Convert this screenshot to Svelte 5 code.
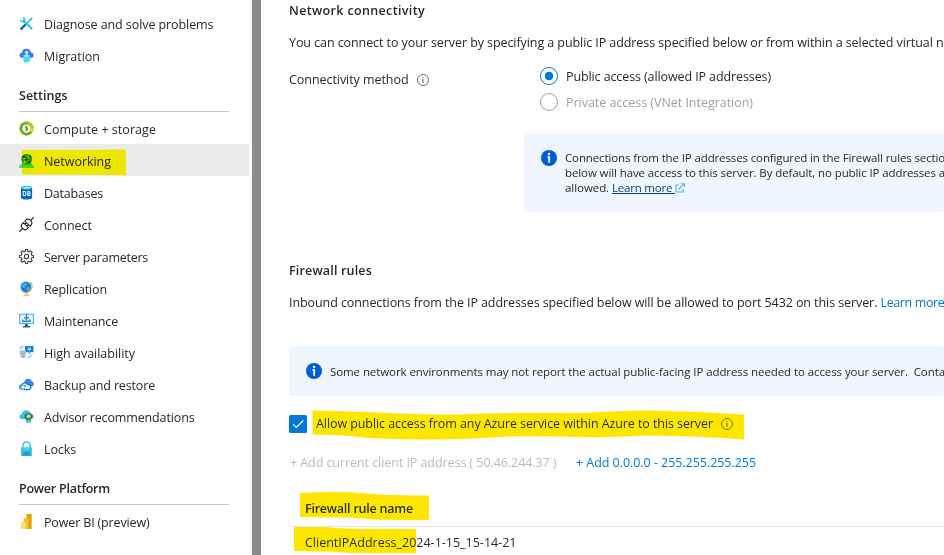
<script>
  const settings = [
    { id: 'compute', label: 'Compute + storage', width: 112 },
    { id: 'network', label: 'Networking', width: 67, selected: true },
    { id: 'database', label: 'Databases', width: 59 },
    { id: 'connect', label: 'Connect', width: 48 },
    { id: 'gear', label: 'Server parameters', width: 104 },
    { id: 'globe', label: 'Replication', width: 63 },
    { id: 'maintenance', label: 'Maintenance', width: 74 },
    { id: 'availability', label: 'High availability', width: 91 },
    { id: 'backup', label: 'Backup and restore', width: 111 },
    { id: 'advisor', label: 'Advisor recommendations', width: 150.5 },
    { id: 'lock', label: 'Locks', width: 32 }
  ];
  const top = [
    { id: 'diagnose', label: 'Diagnose and solve problems', width: 169.5 },
    { id: 'migration', label: 'Migration', width: 56 }
  ];
  const power = [{ id: 'powerbi', label: 'Power BI (preview)', width: 105.5 }];

  // Spreads the letters so that a label takes the given width.
  function fit(node, width) {
    const natural = node.getBoundingClientRect().width;
    node.style.letterSpacing = `${(width - natural) / node.textContent.length}px`;
  }
</script>

{#snippet icon(id)}
  <svg class="icon" viewBox="0 0 16 16" width="15" height="15">
    {#if id === 'diagnose'}
      <path d="M3 13.200 13.200 3" stroke="#32bedd" stroke-width="1.600" />
      <path d="M13.700 1.600l1 1-1.500 2-1.200.2-.6-.6.3-1.200z" fill="#5ea0ef" />
      <path d="M2.400 13.700 6.800 9.200" stroke="#0f6cbd" stroke-width="2.600" stroke-linecap="round" />
      <path d="M5 5l8.300 8.400" stroke="#32c5e8" stroke-width="2.400" stroke-linecap="round" />
      <path d="M1.200 3.200 3 5l1.600-.4L5 3 3.300 1.200C6 .7 7.500 2.500 6.700 5.300L5.200 6.800C2.600 7.500.700 5.800 1.200 3.200z" fill="#32c5e8" />
    {:else if id === 'migration'}
      <path d="M3.600 10.500C1.500 10.500.500 9.100.500 7.700S1.600 5.200 3 5C3.300 2.500 5.300.800 8 .800s4.300 1.600 4.800 3.900c1.700.200 2.900 1.400 2.900 3s-1.200 2.800-3 2.800z" fill="#347ee8" />
      <path d="M4.700 8.200h6.800V14c0 2-6.800 2-6.800 0z" fill="#45dcf5" />
      <ellipse cx="8.100" cy="8.300" rx="3.400" ry="1.200" fill="#7eeaff" />
      <path d="M7.400 8.500v-3H5.700L8.100 2.700l2.400 2.800H8.800v3z" fill="#fff" />
    {:else if id === 'compute'}
      <circle cx="8" cy="8" r="6" fill="#fff" stroke="#6bb11f" stroke-width="3.200" />
      <path d="M8 2a6 6 0 0 1 5.700 8" fill="none" stroke="#a5cb2b" stroke-width="3.200" />
      <path d="M13.900 7a6 6 0 0 1-1 4.400" fill="none" stroke="#f5d516" stroke-width="3.200" />
      <path d="M8 5v6M9.300 6.300H7.500c-1 0-1 1.600.2 1.600h.8c1.200 0 1.200 1.700 0 1.700H6.700" fill="none" stroke="#417e20" stroke-width=".9" />
    {:else if id === 'network'}
      <path d="M.5 16V14l2.600-3h9.800l2.600 3v2z" fill="#34ce94" />
      <path d="M0 13.500h16V16H0z" fill="#42dba3" />
      <circle cx="8.200" cy="6.700" r="5.900" fill="#2e9a2a" />
      <path d="M3.500 5 8 7l3.500-5M8 7l4.500 3M8 7l-3 4" fill="none" stroke="#b9d635" stroke-width="1.300" />
      <circle cx="8" cy="7" r="1.700" fill="#075a19" /><circle cx="5" cy="4.200" r="1.500" fill="#075a19" /><circle cx="11.200" cy="9.500" r="1.500" fill="#075a19" /><circle cx="11.500" cy="3.500" r="1.200" fill="#075a19" />
    {:else if id === 'database'}
      <path d="M2 2.800h12v10.800c0 2.600-12 2.600-12 0z" fill="#0669bd" />
      <ellipse cx="8" cy="2.800" rx="6" ry="2.100" fill="#37c4e4" />
      <ellipse cx="8" cy="3" rx="4" ry="1" fill="#a5edf8" />
      <text x="8" y="11.400" text-anchor="middle" font-size="6.500" font-weight="700" fill="#e6f5ff">DB</text>
    {:else if id === 'connect'}
      <g fill="none" stroke="#222" stroke-width="1.200" transform="rotate(-45 8 8)">
        <path d="M-3 8h5M14 8h5M7 4.200H5.500a3.500 3.800 0 0 0 0 7.600H7zM9.300 4.200h1.400a3.500 3.800 0 0 1 0 7.600H9.300zM7 6.300h2.200M7 9.700h2.200" />
      </g>
    {:else if id === 'gear'}
      <g fill="none" stroke="#333" stroke-width="1.100" stroke-linejoin="round">
        <path d="m6.900.6-.5 2.100-1 .4-1.900-1.200-1.600 1.600 1.200 1.900-.4 1-2.100.5v2.200l2.100.5.4 1-1.200 1.900 1.600 1.600 1.900-1.200 1 .4.5 2.100h2.200l.5-2.100 1-.4 1.900 1.200 1.600-1.600-1.200-1.900.4-1 2.100-.5V6.900l-2.100-.5-.4-1 1.200-1.900-1.600-1.600-1.900 1.200-1-.4-.5-2.100z" />
        <circle cx="8" cy="8" r="2.300" />
      </g>
    {:else if id === 'globe'}
      <path d="M12 1.200c3.800 3.900 2 10.300-3.800 11.100-2.300.3-4.200-.6-5.200-1.900M8.200 12.500V15M5.200 15h6" fill="none" stroke="#f2a657" stroke-width="1.300" />
      <circle cx="7.300" cy="6.200" r="5.700" fill="#1b80d4" />
      <path d="M5 2.500 8 1.800l1 2-2 1.300-.5 2L4 7 2.200 5zM8.500 7.200 11.500 6l.8 1.400-2.500 3-1.500-.7z" fill="#35b8e9" />
    {:else if id === 'maintenance'}
      <path d="M.7 1.300h14.600v9.900H.7z" fill="#e9f7fe" stroke="#4aafe2" stroke-width="1.200" />
      <path d="M6.300 11.700h3.400v2.100H12v1.700H4v-1.700h2.300z" fill="#2369a8" />
      <path d="M8 .5v6M5.600 4.300 8 6.700l2.400-2.400M4 6.800v2h8v-2" fill="none" stroke="#2488cc" stroke-width="1.350" />
    {:else if id === 'availability'}
      <path d="M6.500 1h9v6.700h-9z" fill="#1687db" /><path d="M9.500 2.700h3v3h-3z" fill="#9bdefa" />
      <path d="M9.700 7.700h2.700v1.500H9.700z" fill="#57afe0" />
      <path d="M.8 5.800h6.500v5.400H.8z" fill="#b3b7bb" /><path d="M3 11.200h3v1.300H3zM1.800 12.300h5v1h-5z" fill="#91979d" />
      <path d="M1.200 4.500C1.500 2.800 3 1.700 4.800 1.600M9 13.200c1.900.2 3.500-.8 4.400-2.700" fill="none" stroke="#60b9eb" stroke-width="1.100" />
    {:else if id === 'backup'}
      <path d="M5.500 7c-.3-3 1.600-5.200 4.300-5.200 2.100 0 3.600 1.300 4 3.100 1.300.3 2 1.300 2 2.500 0 1.700-1.300 2.800-3 2.800H9z" fill="#3c83e5" />
      <path d="M3.200 13.300C-.2 13 .100 8.800 3.100 8.500c.7-2.900 5-3.100 6.300-.3 2 .100 3.200 1.400 3.200 2.800 0 1.500-1.300 2.500-3 2.500H4.500" fill="#fff" stroke="#1377cf" stroke-width="1.300" />
      <path d="M6.800 10.200A2 2 0 1 0 6.500 12M6.900 8.800v1.800H5.100" fill="none" stroke="#32a7e2" stroke-width="1" />
    {:else if id === 'advisor'}
      <path d="M3.600 11C1.500 11 .4 9.600.4 8.200c0-1.500 1.200-2.600 2.700-2.800.2-2.400 2.200-4.200 4.700-4.200s4.300 1.600 4.900 3.900c1.700.2 2.900 1.400 2.900 3 0 1.700-1.200 2.900-3 2.900z" fill="#32c8e7" />
      <path d="M7.500 9.500h2.400v5.300l-1.200-.8-1.200 1.100zM10.300 9.500h2.200v5.600l-1.100-1.100-1.100.8z" fill="#35b8a6" />
      <path d="m10 4.200 1.300.6 1.400-.2.600 1.300 1.300.8-.3 1.300.3 1.300-1.300.7-.6 1.300-1.400-.1-1.300.7-1.300-.7-1.300.1-.6-1.300-1.100-.7.2-1.300-.2-1.300 1.100-.8.600-1.300 1.300.2z" fill="#13768a" />
      <circle cx="10.200" cy="7.800" r="2.300" fill="#ffc71f" />
    {:else if id === 'lock'}
      <path d="M4.200 7.500V4.900C4.200 2.500 5.700 1 8 1s3.800 1.500 3.800 3.900v2.600" fill="none" stroke="#4dc8e5" stroke-width="1.700" />
      <path d="M2.300 7h11.400v8.700H2.300z" fill="#2bc1df" /><path d="M2.300 15.700 8 10.500l5.700 5.200z" fill="#199fc2" /><path d="M2.300 7h11.400L8 11.300z" fill="#42d4ed" />
    {:else if id === 'powerbi'}
      <path d="M8 0h5.500v16H8z" fill="#dfa400" /><path d="M5 4.300h5V16H5z" fill="#efc333" /><path d="M2 8.500h5.200V16H2z" fill="#f8df68" />
    {/if}
  </svg>
{/snippet}

{#snippet items(list)}
  <ul>
    {#each list as item}
      <li class:selected={item.selected}>
        {@render icon(item.id)}
        <span class="t" use:fit={item.width}>{item.label}</span>
      </li>
    {/each}
  </ul>
{/snippet}

{#snippet hint()}
  <svg class="hint" viewBox="0 0 12 12" width="12" height="12">
    <circle cx="6" cy="6" r="5.500" fill="none" stroke="currentColor" stroke-width=".9" />
    <path d="M6 5v4M6 3v1" stroke="currentColor" stroke-width="1" />
  </svg>
{/snippet}

{#snippet info()}
  <svg class="info" viewBox="0 0 16 16" width="16" height="16">
    <circle cx="8" cy="8" r="8" fill="#015cda" />
    <circle cx="8" cy="4" r="1.300" fill="#fff" />
    <path d="M6.200 6.300h2.900v6.400H7.200V7.400h-1z" fill="#fff" />
  </svg>
{/snippet}

<div class="page">
  <nav>
    <div class="top">{@render items(top)}</div>
    <h2 class="first"><span class="t" use:fit={48.500}>Settings</span></h2>
    <div class="group">{@render items(settings)}</div>
    <h2 class="second"><span class="t" use:fit={91}>Power Platform</span></h2>
    <div class="group">{@render items(power)}</div>
  </nav>
  <div class="divider"></div>
  <main>
    <h3><span class="t" use:fit={136}>Network connectivity</span></h3>
    <p class="intro"><span class="t" use:fit={654.500}>You can connect to your server by specifying a public IP address specified below or from within a selected virtual n</span></p>
    <div class="method">
      <div class="method-label"><span class="t" use:fit={119.500}>Connectivity method</span>{@render hint()}</div>
      <div class="radios">
        <div class="radio on"><i></i><span class="t" use:fit={205}>Public access (allowed IP addresses)</span></div>
        <div class="radio off"><i></i><span class="t" use:fit={187}>Private access (VNet Integration)</span></div>
      </div>
    </div>
    <div class="banner tall">
      {@render info()}
      <div class="lines">
        <div><span class="t" use:fit={387}>Connections from the IP addresses configured in the Firewall rules section</span></div>
        <div><span class="t" use:fit={380}>below will have access to this server. By default, no public IP addresses a</span></div>
        <div class="last"><span class="t" use:fit={47}>{'allowed. '}</span><a class="t" href="#more" use:fit={63}>{'Learn more '}</a><svg viewBox="0 0 10 10" width="10" height="10"><path d="M4 2H1v7h7V6M3.500 6.500 9 1M6 .7h3.400V4" fill="none" stroke="#55b5db" stroke-width="1.100" /></svg></div>
      </div>
    </div>
    <h3 class="rules"><span class="t" use:fit={83}>Firewall rules</span></h3>
    <p class="inbound"><span class="t" use:fit={591.500}>{'Inbound connections from the IP addresses specified below will be allowed to port 5432 on this server. '}</span><span class="t link" use:fit={64}>Learn more</span></p>
    <div class="banner short">
      {@render info()}
      <span class="t" use:fit={615}>{'Some network environments may not report the actual public-facing IP address needed to access your server.\u00a0 Conta'}</span>
    </div>
    <div class="allow">
      <svg class="check" viewBox="0 0 18 18" width="18" height="18"><rect width="18" height="18" rx="1.500" fill="#0078d4" /><path d="m4 9.200 3.300 3.300 7-7" fill="none" stroke="#fff" stroke-width="1.100" /></svg>
      <span class="t" use:fit={397}>Allow public access from any Azure service within Azure to this server</span>
      {@render hint()}
    </div>
    <div class="actions">
      <span class="t muted" use:fit={266.500}>+ Add current client IP address ( 50.46.244.37 )</span>
      <span class="t link" use:fit={180}>+ Add 0.0.0.0 - 255.255.255.255</span>
    </div>
    <div class="table">
      <div class="th"><span class="t" use:fit={108}>Firewall rule name</span></div>
      <div class="td"><span class="t" use:fit={211.500}>ClientIPAddress_2024-1-15_15-14-21</span></div>
    </div>
  </main>
  <svg class="marker" viewBox="0 0 944 555" width="944" height="555" fill="#ffe600">
    <path d="M22 150 126 149.500V175.500L118 175 22 174.500z" />
    <path d="M312.500 410.500Q350 411 390 413T460 414.500Q500 412 580 413 620 410.500 650 410.500 700 411.500 744 414.500V439.500Q700 436 645 435.500 610 438 580 437 540 436 510 436.500 460 440 420 439.500 370 439 350 436 330 434.500 312.500 434.500z" />
    <path d="M300 493Q340 491 365 493.500 395 495.500 429 495.500V520H400Q375 520 350 517.500L300 517z" />
    <path d="M294 527H325Q345 529 370 529H416V553H350L330 551.500 294 551z" />
  </svg>
</div>

<style>
  :global(body) { margin: 0; background: #fff; }
  .page { position: relative; display: flex; width: 944px; height: 555px; overflow: hidden; background: #fff; color: #292827; font: 12.500px/16px "Open Sans", "Noto Sans", sans-serif; }
  .t { display: inline-block; white-space: pre; flex: none; }
  .icon, .hint, .info, .check { flex: none; display: block; }
  text { font-family: "Open Sans", sans-serif; }
  nav { width: 249px; flex: none; padding-top: 8px; box-sizing: border-box; }
  ul { list-style: none; margin: 0; padding: 0; }
  li { height: 32px; display: flex; align-items: flex-start; gap: 10px; padding: 9px 0 0 19px; box-sizing: border-box; }
  .top li { padding-top: 8px; }
  .top .t { padding-top: 1px; }
  .group .t { padding-top: 1px; }
  li.selected { background: #edebe9; }
  h2, h3 { margin: 0; font-size: 12.500px; font-weight: 600; line-height: 16px; }
  h2 { margin: 0 20px 0 19px; border-bottom: 1px solid #c8c6c4; box-sizing: border-box; }
  .first { height: 40px; padding-top: 16px; }
  .second { height: 41px; padding-top: 17px; }
  .divider { width: 9px; flex: none; background: #8b8b8b; border-left: 3px solid #fafafa; border-right: 3px solid #fafafa; }
  main { flex: 1; min-width: 0; padding: 3px 0 0 25px; overflow: hidden; }
  p { margin: 0; white-space: nowrap; }
  .intro { padding-top: 16px; height: 15px; }
  .method { display: flex; height: 83px; }
  .method-label { width: 251px; flex: none; display: flex; align-items: center; gap: 8.500px; height: 16px; padding-top: 22px; }
  .hint { color: #605e5c; }
  .radios { padding-top: 17px; display: flex; flex-direction: column; gap: 8px; }
  .radio { display: flex; align-items: center; height: 18px; gap: 8px; }
  .radio .t { padding-top: 2px; }
  i { width: 18px; height: 18px; border: 1px solid #a19f9d; border-radius: 50%; box-sizing: border-box; }
  .on i { border-color: #0078d4; background: radial-gradient(circle, #0078d4 0 4px, transparent 4.600px); }
  .off { color: #a19f9d; }
  .banner { display: flex; background: #eff6ff; border-radius: 2px; font-size: 11.500px; line-height: 15px; gap: 8px; box-sizing: border-box; }
  .tall { margin-left: 235px; height: 79px; padding: 17px 0 0 17px; }
  .lines > div { height: 15px; white-space: nowrap; }
  .last { display: flex; align-items: center; }
  a { color: #004578; }
  .rules { padding-top: 51px; }
  .inbound { padding-top: 16px; height: 15px; }
  .link { color: #0078d4; }
  .muted { color: #bdbbb9; }
  .short { height: 50px; margin-top: 36px; padding-left: 17px; align-items: center; }
  .allow { display: flex; align-items: center; height: 18px; margin-top: 19px; }
  .allow .t { margin: 0 8px 0 9px; }
  .actions { display: flex; gap: 19.500px; padding: 22px 0 0 1px; }
  .th { padding: 30px 0 0 16px; height: 25px; font-weight: 600; border-bottom: 1px solid #e5e3e1; }
  .td { padding: 8px 0 0 16px; }
  .marker { position: absolute; left: 0; top: 0; mix-blend-mode: darken; pointer-events: none; }
</style>
